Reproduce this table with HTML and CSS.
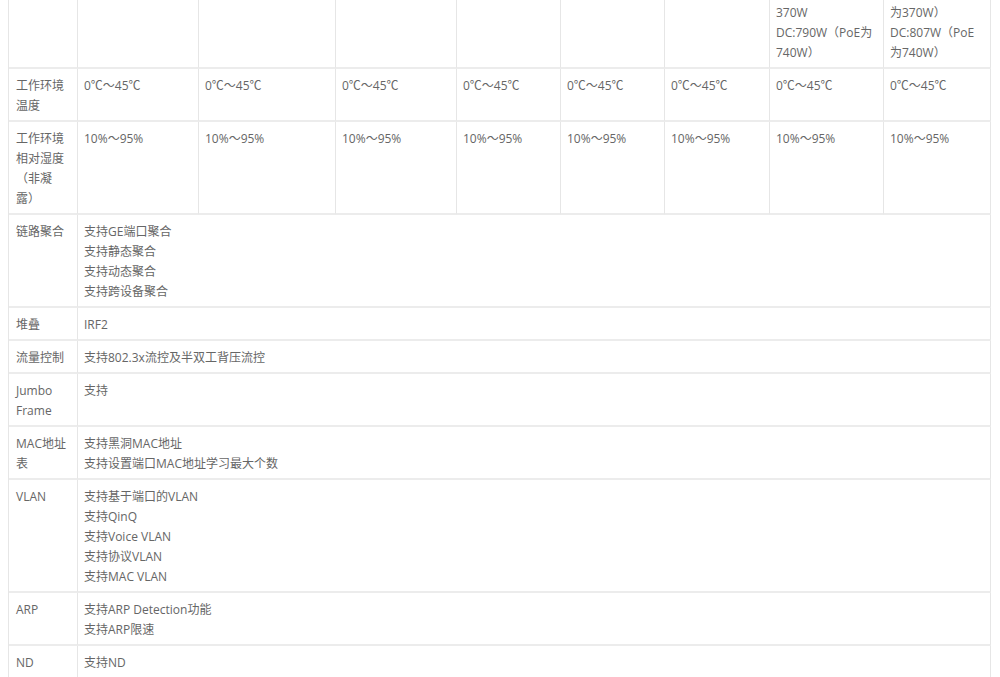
FILE: index.html
```html
<!DOCTYPE html>
<html lang="zh-CN">
<head>
<meta charset="utf-8">
<title>规格参数</title>
<link rel="stylesheet" href="styles.css">
</head>
<body>
<table class="spec">
  <colgroup>
    <col class="c-label">
    <col class="c2">
    <col class="c3">
    <col class="c4">
    <col class="c5">
    <col class="c6">
    <col class="c7">
    <col class="c8">
    <col class="c9">
  </colgroup>
  <tbody>
    <tr class="cut">
      <td></td><td></td><td></td><td></td><td></td><td></td><td></td>
      <td>370W<br>DC:790W（PoE为740W）</td>
      <td>为370W）<br>DC:807W（PoE为740W）</td>
    </tr>
    <tr>
      <td>工作环境温度</td>
      <td>0℃～45℃</td><td>0℃～45℃</td><td>0℃～45℃</td><td>0℃～45℃</td>
      <td>0℃～45℃</td><td>0℃～45℃</td><td>0℃～45℃</td><td>0℃～45℃</td>
    </tr>
    <tr>
      <td>工作环境相对湿度（非凝露）</td>
      <td>10%～95%</td><td>10%～95%</td><td>10%～95%</td><td>10%～95%</td>
      <td>10%～95%</td><td>10%～95%</td><td>10%～95%</td><td>10%～95%</td>
    </tr>
    <tr>
      <td>链路聚合</td>
      <td colspan="8">支持GE端口聚合<br>支持静态聚合<br>支持动态聚合<br>支持跨设备聚合</td>
    </tr>
    <tr>
      <td>堆叠</td>
      <td colspan="8">IRF2</td>
    </tr>
    <tr>
      <td>流量控制</td>
      <td colspan="8">支持802.3x流控及半双工背压流控</td>
    </tr>
    <tr>
      <td>Jumbo Frame</td>
      <td colspan="8">支持</td>
    </tr>
    <tr>
      <td>MAC地址表</td>
      <td colspan="8">支持黑洞MAC地址<br>支持设置端口MAC地址学习最大个数</td>
    </tr>
    <tr>
      <td>VLAN</td>
      <td colspan="8">支持基于端口的VLAN<br>支持QinQ<br>支持Voice VLAN<br>支持协议VLAN<br>支持MAC VLAN</td>
    </tr>
    <tr>
      <td>ARP</td>
      <td colspan="8">支持ARP Detection功能<br>支持ARP限速</td>
    </tr>
    <tr>
      <td>ND</td>
      <td colspan="8">支持ND</td>
    </tr>
  </tbody>
</table>
</body>
</html>
```

FILE: styles.css
```css
html, body {
  margin: 0;
  padding: 0;
  background: #ffffff;
}

body {
  padding: 0 8px;
  font-family: "Open Sans", "Noto Sans CJK SC", sans-serif;
  font-size: 12px;
  line-height: 20px;
  color: #666666;
  text-spacing-trim: space-all;
}

.spec {
  table-layout: fixed;
  width: 983px;
  border-collapse: separate;
  border-spacing: 0;
  border-left: 1px solid #e6e6e6;
}

.spec td {
  vertical-align: top;
  padding: 7px 8px 4px 6px;
  border-right: 1px solid #e6e6e6;
  border-bottom: 2px solid #ececec;
  overflow-wrap: anywhere;
}

.spec td:first-child {
  padding-left: 7px;
  padding-right: 7px;
}

.spec tr.cut td {
  padding-top: 3px;
}

.c-label { width: 69px; }
.c2 { width: 121px; }
.c3 { width: 137px; }
.c4 { width: 121px; }
.c5 { width: 104px; }
.c6 { width: 104px; }
.c7 { width: 105px; }
.c8 { width: 114px; }
.c9 { width: 107px; }
```
